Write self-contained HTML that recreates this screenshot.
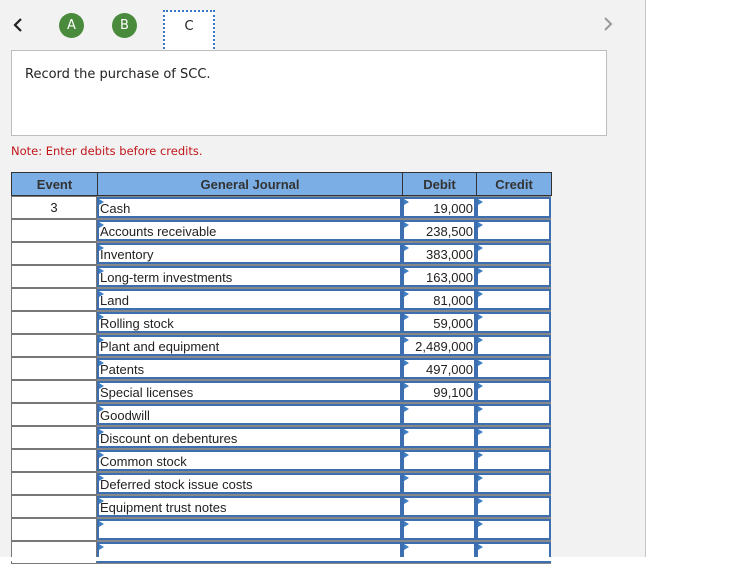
<!DOCTYPE html>
<html><head><style>
body{margin:0;width:737px;height:561px;background:#fff;position:relative;overflow:hidden;font-family:"Liberation Sans",Arial,sans-serif}
.panel{position:absolute;left:0;top:0;width:645px;height:557px;background:#f2f2f2;border-right:1px solid #c4c4c4}
.circ{position:absolute;width:25px;height:25px;border-radius:50%;background:#4a8a3c;color:#fff;font-size:13px;line-height:25px;text-align:center;font-family:"DejaVu Sans",sans-serif}
.tabc{position:absolute;left:163px;top:10px;width:48px;height:39px;background:#fff;border:2px dotted #3a76c4;text-align:center;font-family:"DejaVu Sans",sans-serif;font-size:13px;line-height:30px;color:#222}
.prompt{position:absolute;left:11px;top:50px;width:594px;height:84px;background:#fff;border:1px solid #bdbdbd}
.prompt span{position:absolute;left:13px;top:16px;font-family:"DejaVu Sans",sans-serif;font-size:13px;color:#222}
.note{position:absolute;left:11px;top:144px;font-family:"DejaVu Sans",sans-serif;font-size:11.5px;color:#c0161b}
.hdr{position:absolute;top:172px;height:24px;background:#7aaee4;border:1px solid #333;box-sizing:border-box;font-size:13px;font-weight:bold;color:#333;text-align:center;line-height:23px}
.ev{position:absolute;left:11px;width:86px;height:23px;background:#fff;border:1px solid #777;box-sizing:border-box;text-align:center;font-size:13px;line-height:22px;color:#222}
.in{position:absolute;height:23px;background:#888;box-sizing:border-box;padding:1px 0}
.in div{height:21px;background:#fff;border:2px solid #3d6fb0;box-sizing:border-box;font-size:13px;line-height:19px;color:#222;padding:0 1px;position:relative;white-space:nowrap}
.in div:before{content:"";position:absolute;left:0;top:0;border-left:5px solid #3d7ec4;border-top:3px solid transparent;border-bottom:3px solid transparent}
.r{text-align:right}
</style></head><body>
<div class="panel"></div>
<svg style="position:absolute;left:12px;top:17px" width="12" height="16"><path d="M9 2 L3 8 L9 14" stroke="#222" stroke-width="2.2" fill="none"/></svg>
<div class="circ" style="left:59px;top:13px">A</div>
<div class="circ" style="left:112px;top:13px">B</div>
<div class="tabc">C</div>
<svg style="position:absolute;left:602px;top:16px" width="12" height="16"><path d="M3 2 L9 8 L3 14" stroke="#999" stroke-width="2" fill="none"/></svg>
<div class="prompt"><span>Record the purchase of SCC.</span></div>
<div class="note">Note: Enter debits before credits.</div>

<div class="hdr" style="left:11px;width:87px">Event</div>
<div class="hdr" style="left:97px;width:306px">General Journal</div>
<div class="hdr" style="left:402px;width:75px">Debit</div>
<div class="hdr" style="left:476px;width:76px">Credit</div>

<div style="position:absolute;left:0;top:196px">
<div class="ev" style="top:0">3</div><div class="in" style="top:0;left:97px;width:305px"><div>Cash</div></div><div class="in" style="top:0;left:402px;width:74px"><div class="r">19,000</div></div><div class="in" style="top:0;left:476px;width:75px"><div></div></div>
<div class="ev" style="top:23px"></div><div class="in" style="top:23px;left:97px;width:305px"><div>Accounts receivable</div></div><div class="in" style="top:23px;left:402px;width:74px"><div class="r">238,500</div></div><div class="in" style="top:23px;left:476px;width:75px"><div></div></div>
<div class="ev" style="top:46px"></div><div class="in" style="top:46px;left:97px;width:305px"><div>Inventory</div></div><div class="in" style="top:46px;left:402px;width:74px"><div class="r">383,000</div></div><div class="in" style="top:46px;left:476px;width:75px"><div></div></div>
<div class="ev" style="top:69px"></div><div class="in" style="top:69px;left:97px;width:305px"><div>Long-term investments</div></div><div class="in" style="top:69px;left:402px;width:74px"><div class="r">163,000</div></div><div class="in" style="top:69px;left:476px;width:75px"><div></div></div>
<div class="ev" style="top:92px"></div><div class="in" style="top:92px;left:97px;width:305px"><div>Land</div></div><div class="in" style="top:92px;left:402px;width:74px"><div class="r">81,000</div></div><div class="in" style="top:92px;left:476px;width:75px"><div></div></div>
<div class="ev" style="top:115px"></div><div class="in" style="top:115px;left:97px;width:305px"><div>Rolling stock</div></div><div class="in" style="top:115px;left:402px;width:74px"><div class="r">59,000</div></div><div class="in" style="top:115px;left:476px;width:75px"><div></div></div>
<div class="ev" style="top:138px"></div><div class="in" style="top:138px;left:97px;width:305px"><div>Plant and equipment</div></div><div class="in" style="top:138px;left:402px;width:74px"><div class="r">2,489,000</div></div><div class="in" style="top:138px;left:476px;width:75px"><div></div></div>
<div class="ev" style="top:161px"></div><div class="in" style="top:161px;left:97px;width:305px"><div>Patents</div></div><div class="in" style="top:161px;left:402px;width:74px"><div class="r">497,000</div></div><div class="in" style="top:161px;left:476px;width:75px"><div></div></div>
<div class="ev" style="top:184px"></div><div class="in" style="top:184px;left:97px;width:305px"><div>Special licenses</div></div><div class="in" style="top:184px;left:402px;width:74px"><div class="r">99,100</div></div><div class="in" style="top:184px;left:476px;width:75px"><div></div></div>
<div class="ev" style="top:207px"></div><div class="in" style="top:207px;left:97px;width:305px"><div>Goodwill</div></div><div class="in" style="top:207px;left:402px;width:74px"><div></div></div><div class="in" style="top:207px;left:476px;width:75px"><div></div></div>
<div class="ev" style="top:230px"></div><div class="in" style="top:230px;left:97px;width:305px"><div>Discount on debentures</div></div><div class="in" style="top:230px;left:402px;width:74px"><div></div></div><div class="in" style="top:230px;left:476px;width:75px"><div></div></div>
<div class="ev" style="top:253px"></div><div class="in" style="top:253px;left:97px;width:305px"><div>Common stock</div></div><div class="in" style="top:253px;left:402px;width:74px"><div></div></div><div class="in" style="top:253px;left:476px;width:75px"><div></div></div>
<div class="ev" style="top:276px"></div><div class="in" style="top:276px;left:97px;width:305px"><div>Deferred stock issue costs</div></div><div class="in" style="top:276px;left:402px;width:74px"><div></div></div><div class="in" style="top:276px;left:476px;width:75px"><div></div></div>
<div class="ev" style="top:299px"></div><div class="in" style="top:299px;left:97px;width:305px"><div>Equipment trust notes</div></div><div class="in" style="top:299px;left:402px;width:74px"><div></div></div><div class="in" style="top:299px;left:476px;width:75px"><div></div></div>
<div class="ev" style="top:322px"></div><div class="in" style="top:322px;left:97px;width:305px"><div></div></div><div class="in" style="top:322px;left:402px;width:74px"><div></div></div><div class="in" style="top:322px;left:476px;width:75px"><div></div></div>
<div class="ev" style="top:345px"></div><div class="in" style="top:345px;left:97px;width:305px"><div></div></div><div class="in" style="top:345px;left:402px;width:74px"><div></div></div><div class="in" style="top:345px;left:476px;width:75px"><div></div></div>
</div>
<div style="position:absolute;left:0;top:557px;width:737px;height:4px;background:#fff;z-index:5"></div>
</body></html>
